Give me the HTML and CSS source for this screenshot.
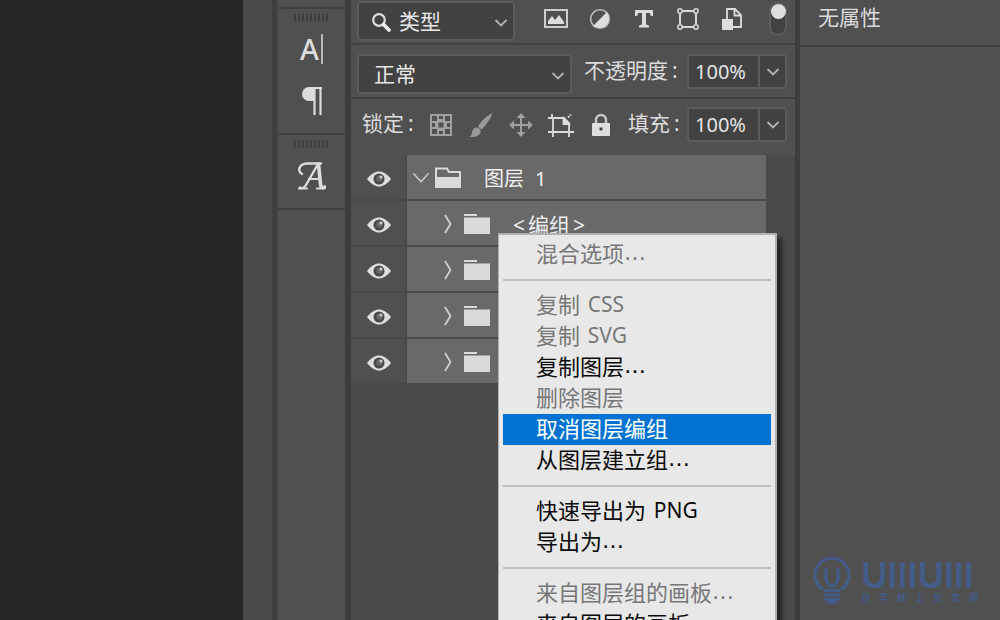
FILE: index.html
```html
<!DOCTYPE html>
<html lang="zh-CN">
<head>
<meta charset="utf-8">
<title>图层</title>
<link rel="stylesheet" href="styles.css">
</head>
<body>
<svg class="defs" aria-hidden="true">
  <symbol id="chevron" viewBox="0 0 14 10"><path d="M1.500 2l5.500 5.500L12.500 2" fill="none" stroke="currentColor" stroke-width="1.800"/></symbol>
  <symbol id="eye" viewBox="0 0 24 16"><path d="M0 8C4.500 2.500 8 .5 12 .5S19.500 2.500 24 8c-4.500 5.500-8 7.500-12 7.500S4.500 13.500 0 8z" fill="#dedede"/><circle cx="12" cy="8" r="5.500" fill="#484848"/><circle cx="12.500" cy="7.500" r="3.200" fill="#686868"/><circle cx="14" cy="6" r="1.500" fill="#d0d0d0"/></symbol>
  <symbol id="right" viewBox="0 0 10 20"><path d="M2 1l5.500 9L2 19" fill="none" stroke="#d0d0d0" stroke-width="1.800"/></symbol>
  <symbol id="folder" viewBox="0 0 26 22"><path d="M0 1h13v2H0zM0 4.500h26V21H0z" fill="#dadada"/></symbol>
</svg>
<div class="app">
  <main class="canvas"></main>
  <div class="gutter"></div>
  <nav class="strip">
    <div class="group stub"></div>
    <div class="group">
      <i class="grip"></i>
      <button class="tool letter" aria-label="字符">A<i class="caret"></i></button>
      <button class="tool" aria-label="段落"><svg width="22" height="28" viewBox="0 0 22 28"><path d="M9 0h12v2H9z" fill="#dcdcdc"/><path d="M8 0h6v14H8A7 7 0 0 1 8 0z" fill="#dcdcdc"/><path d="M13.500 1v27M19.500 1v27" stroke="#dcdcdc" stroke-width="2.200"/></svg></button>
    </div>
    <div class="group glyphs">
      <i class="grip"></i>
      <button class="tool" aria-label="字形"><svg width="28" height="28" viewBox="0 0 28 28" fill="none" stroke="#dcdcdc" stroke-linecap="round" stroke-linejoin="round"><path d="M4 12C-1 9 1 2 9 1.500h14" stroke-width="2.400"/><path d="M20 2L8 23c-1.500 2.500-4 4-6 2.500" stroke-width="2.400"/><path d="M20.500 2l2 20c.2 3 1 4.500 4.500 3" stroke-width="3.600"/><path d="M11 17h11M1 26.500h8M19 26.500h7" stroke-width="2.200"/></svg></button>
    </div>
    <div class="group rest"></div>
  </nav>
  <section class="layers">
    <div class="bar filters">
      <div class="pick kind">
        <svg class="search" width="20" height="20" viewBox="0 0 20 20"><circle cx="8" cy="8" r="5.800" fill="none" stroke="#dedede" stroke-width="2.200"/><path d="M12.500 12.500l5.500 5.500" stroke="#f0f0f0" stroke-width="3.600" stroke-linecap="round"/></svg>
        <select aria-label="筛选类型"><option>类型</option></select>
        <svg class="arrow"><use href="#chevron"/></svg>
      </div>
      <div class="icons">
        <button aria-label="像素图层"><svg width="24" height="20" viewBox="0 0 24 20"><rect x="1" y="1" width="22" height="17" fill="none" stroke="#dcdcdc" stroke-width="1.800"/><path d="M4 15v-3l4-5 3 4 4-5 5 7v2z" fill="#dcdcdc"/></svg></button>
        <button aria-label="调整图层"><svg width="22" height="22" viewBox="0 0 22 22"><circle cx="11" cy="11" r="9.300" fill="none" stroke="#bcbcbc" stroke-width="1.600"/><path d="M17.700 4.300A9.500 9.500 0 0 1 4.300 17.700z" fill="#dedede"/></svg></button>
        <button aria-label="文字图层"><svg width="20" height="18" viewBox="0 0 20 18"><path d="M1 0h18v6h-2.200l-1-3H12v11.500l3 1V17.500H5V15.500l3-1V3H4.200l-1 3H1z" fill="#dcdcdc"/></svg></button>
        <button aria-label="形状图层"><svg width="22" height="22" viewBox="0 0 22 22" fill="none" stroke="#d8d8d8"><path d="M3 5v12M19 5v12M5 3h12M5 19h12" stroke-width="2"/><g fill="#505050" stroke-width="1.500"><circle cx="3" cy="3" r="2.200"/><circle cx="19" cy="3" r="2.200"/><circle cx="3" cy="19" r="2.200"/><circle cx="19" cy="19" r="2.200"/></g></svg></button>
        <button aria-label="智能对象"><svg width="22" height="24" viewBox="0 0 22 24"><path d="M6 12V2h8l6 6v12h-8M13.500 2v6.500H20" fill="none" stroke="#dcdcdc" stroke-width="1.800"/><path d="M1 12h11v11H1z" fill="#dedede"/></svg></button>
      </div>
      <button class="toggle" aria-label="打开或关闭图层过滤"><i></i></button>
    </div>
    <div class="bar blend">
      <div class="pick mode">
        <select aria-label="混合模式"><option>正常</option></select>
        <svg class="arrow"><use href="#chevron"/></svg>
      </div>
      <label for="opacity">不透明度<span>:</span></label>
      <div class="value"><input id="opacity" value="100%"><button aria-label="调整不透明度"><svg width="14" height="10"><use href="#chevron"/></svg></button></div>
    </div>
    <div class="bar locks">
      <span class="title">锁定<span>:</span></span>
      <div class="icons">
        <button aria-label="锁定透明像素"><svg width="22" height="22" viewBox="0 0 22 22"><path fill="#a0a0a0" d="M0 0h22v22H0z"/><path fill="#505050" d="M2 2h5v5H2zM15 2h5v5h-5zM2 15h5v5H2zM15 15h5v5h-5zM9 2h4v3H9zM9 17h4v3H9zM2 9h3v4H2zM17 9h3v4h-3zM8.500 8.500h5v5h-5z"/></svg></button>
        <button aria-label="锁定图像像素"><svg width="24" height="26" viewBox="0 0 24 26" fill="#9a9a9a"><path d="M23.500 1C17 4 12 9.500 9 14.500l3.500 3C17.500 13 21.500 7 23.500 1z"/><path d="M7.500 15.500c2.500 0 4.500 2 4 4.500-1 4-6 5.500-11 5 3-2 2-4 3-6.500.7-1.800 2.300-3 4-3z"/></svg></button>
        <button aria-label="锁定位置"><svg width="24" height="24" viewBox="0 0 24 24"><path d="M12 3v18M3 12h18" stroke="#a0a0a0" stroke-width="2"/><path d="M12 0l4.500 5h-9zM12 24l4.500-5h-9zM0 12l5-4.500v9zM24 12l-5-4.500v9z" fill="#a0a0a0"/></svg></button>
        <button aria-label="防止自动嵌套"><svg width="26" height="24" viewBox="0 0 26 24" fill="none" stroke="#dcdcdc" stroke-width="1.800"><path d="M0 5h4M4 1v3M5 5h11l5 5v9H5zM5 20v4M0 19h4M21 20v4M22 19h4"/><path d="M15.500 5v6H21z" fill="#dcdcdc"/><path d="M20 4.500l3-3" stroke-dasharray="2 1"/></svg></button>
        <button aria-label="锁定全部"><svg width="20" height="24" viewBox="0 0 20 24"><path d="M5 11V7a5 5 0 0 1 10 0v4" fill="none" stroke="#c8c8c8" stroke-width="2.400"/><rect x="1" y="10" width="18" height="13" rx="1" fill="#dedede"/><rect x="8.500" y="14.500" width="3" height="3" fill="#444"/></svg></button>
      </div>
      <label for="fill">填充<span>:</span></label>
      <div class="value"><input id="fill" value="100%"><button aria-label="调整填充"><svg width="14" height="10"><use href="#chevron"/></svg></button></div>
    </div>
    <ul class="tree">
      <li><button class="see" aria-label="可见性"><svg><use href="#eye"/></svg></button><div class="row"><svg class="down" width="18" height="12" viewBox="0 0 18 12"><path d="M1.500 1.500L9 9.500l7.500-8" fill="none" stroke="#c8c8c8" stroke-width="1.600"/></svg><svg width="26" height="22" viewBox="0 0 26 22"><path d="M1 20V1.500h11l2 3.500h11v15z" fill="none" stroke="#dadada" stroke-width="2"/><path d="M0 10h26v11H0z" fill="#dadada"/></svg><span class="name">图层<span class="num">1</span></span></div></li>
      <li><button class="see" aria-label="可见性"><svg><use href="#eye"/></svg></button><div class="row child"><svg class="fold"><use href="#right"/></svg><svg width="26" height="22"><use href="#folder"/></svg><span class="name"><span>&lt;</span><span>编组</span><span>&gt;</span></span></div></li>
      <li><button class="see" aria-label="可见性"><svg><use href="#eye"/></svg></button><div class="row child"><svg class="fold"><use href="#right"/></svg><svg width="26" height="22"><use href="#folder"/></svg></div></li>
      <li><button class="see" aria-label="可见性"><svg><use href="#eye"/></svg></button><div class="row child"><svg class="fold"><use href="#right"/></svg><svg width="26" height="22"><use href="#folder"/></svg></div></li>
      <li><button class="see" aria-label="可见性"><svg><use href="#eye"/></svg></button><div class="row child"><svg class="fold"><use href="#right"/></svg><svg width="26" height="22"><use href="#folder"/></svg></div></li>
    </ul>
    <div class="menu" role="menu">
      <button role="menuitem" disabled>混合选项<span class="dots">…</span></button>
      <hr>
      <button role="menuitem" disabled>复制 <span class="latin">CSS</span></button>
      <button role="menuitem" disabled>复制 <span class="latin">SVG</span></button>
      <button role="menuitem">复制图层<span class="dots">…</span></button>
      <button role="menuitem" disabled>删除图层</button>
      <button role="menuitem" class="active">取消图层编组</button>
      <button role="menuitem">从图层建立组<span class="dots">…</span></button>
      <hr>
      <button role="menuitem">快速导出为 <span class="latin">PNG</span></button>
      <button role="menuitem">导出为<span class="dots">…</span></button>
      <hr>
      <button role="menuitem" disabled>来自图层组的画板<span class="dots">…</span></button>
      <button role="menuitem">来自图层的画板<span class="dots">…</span></button>
    </div>
  </section>
  <aside class="props">
    <h2>无属性</h2>
    <div class="brand">
      <svg width="38" height="50" viewBox="0 0 38 50" fill="none" stroke="#445c88" stroke-linecap="round"><path d="M8.500 32.500a17 17 0 1 1 21 0" stroke-width="3.200"/><path d="M13 13.500v10a6 6 0 0 0 12 0v-10" stroke-width="3.200"/><path d="M12 34.500h14M12 39h14M12 43.500h14" stroke-width="3"/><path d="M15 46.500h8" stroke-width="3"/></svg>
      <div class="words"><span class="logo">UIIIUIII</span><span class="slogan"><b>自</b><b>学</b><b>就</b><b>上</b><b>优</b><b>优</b><b>网</b></span></div>
    </div>
  </aside>
</div>
</body>
</html>
```
FILE: styles.css
```css
* { box-sizing: border-box; }
body {
  margin: 0;
  background: #505050;
  color: #dcdcdc;
  font: 21px/30px "Noto Sans", "Noto Sans CJK SC", sans-serif;
}
button, select, input { font: inherit; color: inherit; border: 0; padding: 0; margin: 0; background: none; }
button { display: flex; align-items: center; justify-content: center; }
svg { display: block; flex: none; }
.defs { position: absolute; width: 0; height: 0; }
.app { display: flex; height: 100vh; overflow: hidden; }
.canvas { flex: 1 1 0; background: #262626; }
.gutter { width: 34px; background: #494949; border-right: 5px solid #3e3e3e; }

.strip { width: 74px; display: flex; flex-direction: column; border-right: 6px solid #3d3d3d; border-left: 1px solid #454545; }
.group { display: flex; flex-direction: column; align-items: center; border-bottom: 2px solid #3f3f3f; padding: 5px 0 7px; }
.stub { height: 9px; padding: 0; }
.glyphs { padding-bottom: 6px; }
.rest { flex: 1; border: 0; }
.grip { width: 36px; height: 8px; background: repeating-linear-gradient(90deg, #3f3f3f 0 2px, #505050 2px 4px); }
.tool { width: 44px; height: 52px; padding-top: 2px; }
.letter { font: 500 29px/40px "Noto Sans", sans-serif; }
.caret { width: 2px; height: 30px; margin-left: 2px; background: #b8b8b8; }
.glyphs .tool { height: 54px; }

.layers { position: relative; width: 444px; background: #4a4a4a; }
.bar { display: flex; background: #505050; border-bottom: 2px solid #414141; padding: 0 8px 0 6px; }
.filters { height: 45px; padding-top: 1px; }
.blend { height: 54px; padding-top: 9px; }
.locks { height: 56px; padding-top: 8px; border: 0; }
.pick { position: relative; height: 40px; }
.pick select { appearance: none; width: 100%; height: 100%; background: #424242; border: 2px solid #5c5c5c; border-radius: 4px; padding-left: 15px; color: #e8e8e8; }
.kind { width: 158px; }
.kind select { padding-left: 40px; }
.mode { width: 215px; }
.search { position: absolute; left: 14px; top: 11px; }
.arrow { position: absolute; right: 7px; top: 17px; width: 14px; height: 10px; color: #b4b4b4; pointer-events: none; }
.icons { display: flex; }
.filters .icons { margin-left: 19px; }
.filters .icons button { width: 44px; height: 36px; }
.toggle { width: 18px; height: 34px; margin: 1px 0 0 auto; background: #424242; border: 2px solid #5c5c5c; border-radius: 9px; align-items: flex-start; }
.toggle i { flex: none; width: 15px; height: 15px; border-radius: 50%; background: #dedede; }
label, .title { display: flex; gap: 4px; line-height: 32px; }
.blend label { margin-left: 12px; }
.value { display: flex; width: 100px; height: 35px; margin-left: auto; background: #424242; border: 2px solid #5c5c5c; border-radius: 4px; }
.value input { flex: 1; min-width: 0; padding-left: 6px; font-size: 20px; color: #e4e4e4; }
.value button { width: 27px; border-left: 2px solid #5c5c5c; color: #b4b4b4; }
.locks .title { width: 64px; padding-left: 5px; }
.locks .icons button { width: 40px; height: 36px; }
.locks .icons { margin-right: 7px; }

.tree { list-style: none; margin: 0; padding: 0 29px 0 0; }
.tree li { display: flex; gap: 2px; height: 46px; border-bottom: 2px solid #4a4a4a; }
.see { width: 54px; background: #505050; padding: 4px 0 0 2px; }
.see svg { width: 24px; height: 16px; }
.row { flex: 1; display: flex; align-items: center; padding: 2px 0 0 5px; background: #696969; }
.down { margin-right: 5px; }
.child { padding-left: 36px; }
.fold { width: 10px; height: 20px; margin-right: 11px; }
.name { display: flex; padding-top: 2px; margin-left: 23px; font-size: 20px; color: #f0f0f0; }
.num { margin-left: 11px; }
.child .name { gap: 3px; font-size: 21px; }

.menu { position: absolute; left: 147px; top: 233px; width: 279px; padding: 4px; background: #e8e8e8; border: 2px solid #b0b0b0; border-width: 2px 2px 2px 1px; box-shadow: 5px 5px 4px rgba(0, 0, 0, .5); }
.menu button { width: 100%; height: 31px; padding: 0 0 3px 33px; justify-content: flex-start; font-size: 22px; color: #0a0a0a; white-space: pre; }
.menu button:disabled { color: #777; }
.menu .active { background: #0073d2; color: #fff; }
.menu hr { height: 2px; margin: 9px 0; border: 0; background: #bebebe; }
.latin { margin-left: 2px; font-size: 21px; }
.dots { font-family: "DejaVu Sans", sans-serif; }

.props { flex: 0 1 205px; display: flex; flex-direction: column; border-left: 5px solid #3d3d3d; }
.props h2 { margin: 0; height: 47px; padding: 2px 18px 0; font-size: 21px; font-weight: 400; border-bottom: 2px solid #414141; }
.brand { display: flex; gap: 10px; margin: auto 22px 14px 13px; color: #445c88; }
.words { display: flex; flex-direction: column; flex: 1; }
.logo { font: 600 36px/38px Inter, sans-serif; }
.slogan { display: flex; justify-content: space-between; font-size: 9px; line-height: 8px; }
```
